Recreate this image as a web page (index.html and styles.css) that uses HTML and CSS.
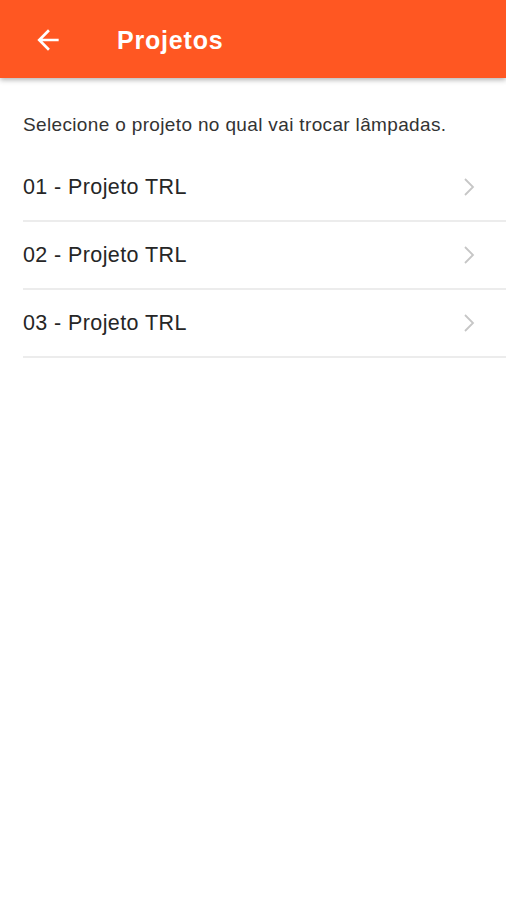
FILE: index.html
```html
<!DOCTYPE html>
<html lang="pt">
<head>
<meta charset="utf-8">
<link rel="stylesheet" href="styles.css">
</head>
<body>
<header class="appbar">
  <svg class="back" viewBox="0 0 24 24" width="32" height="32" aria-hidden="true"><path fill="#fff" d="M20 11H7.83l5.59-5.59L12 4l-8 8 8 8 1.41-1.41L7.83 13H20v-2z"/></svg>
  <h1 class="title">Projetos</h1>
</header>
<main class="content">
  <p class="hint">Selecione o projeto no qual vai trocar lâmpadas.</p>
  <ul class="list">
    <li class="row"><span class="label">01 - Projeto TRL</span><svg class="chev" viewBox="0 0 14 20" width="14" height="20"><polyline points="3,2 11,10 3,18" fill="none" stroke="#c6c6c6" stroke-width="1.8"/></svg></li>
    <li class="row"><span class="label">02 - Projeto TRL</span><svg class="chev" viewBox="0 0 14 20" width="14" height="20"><polyline points="3,2 11,10 3,18" fill="none" stroke="#c6c6c6" stroke-width="1.8"/></svg></li>
    <li class="row"><span class="label">03 - Projeto TRL</span><svg class="chev" viewBox="0 0 14 20" width="14" height="20"><polyline points="3,2 11,10 3,18" fill="none" stroke="#c6c6c6" stroke-width="1.8"/></svg></li>
  </ul>
</main>
</body>
</html>
```
FILE: styles.css
```css
* { box-sizing: border-box; }
html, body { margin: 0; padding: 0; background: #fff; }
body { font-family: "Liberation Sans", Arial, sans-serif; width: 506px; height: 900px; overflow: hidden; }
.appbar {
  height: 78px;
  background: #ff5722;
  display: flex;
  align-items: center;
  padding-left: 32px;
  box-shadow: 0 2px 5px rgba(0,0,0,0.3);
  position: relative;
  z-index: 1;
}
.back { display: block; margin-top: 2px; }
.title {
  margin: 0 0 0 53px;
  font-family: "Liberation Sans", Arial, sans-serif;
  font-weight: 700;
  font-size: 25px;
  letter-spacing: 0.8px;
  color: #fff;
  padding-top: 3px;
}
.content { padding-left: 23px; }
.hint {
  margin: 0;
  padding-top: 35px;
  line-height: 24px;
  height: 76px;
  font-size: 19px;
  letter-spacing: 0.35px;
  color: #333;
}
.list { list-style: none; margin: 0; padding: 0; }
.row {
  height: 68px;
  border-bottom: 2px solid #ececec;
  display: flex;
  align-items: center;
  justify-content: space-between;
  padding-right: 30px;
}
.label { font-size: 21.5px; letter-spacing: 0.4px; color: #262626; }
.chev { display: block; }
```
